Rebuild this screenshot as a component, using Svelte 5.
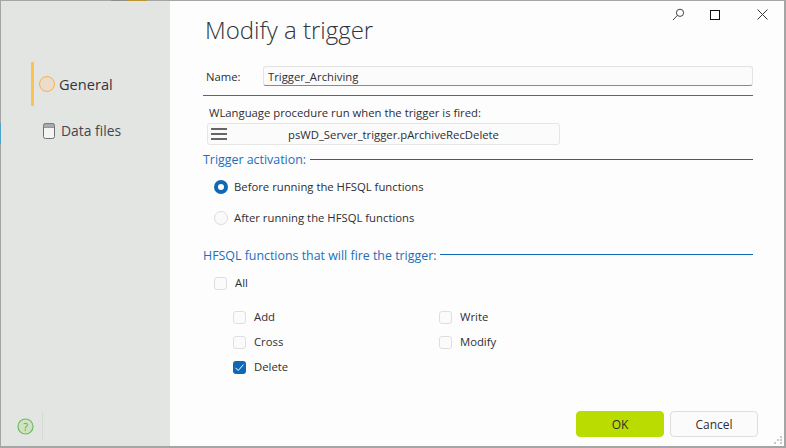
<script lang="ts">
  let name = $state('Trigger_Archiving');

  const leftFns = [
    { label: 'Add', checked: false },
    { label: 'Cross', checked: false },
    { label: 'Delete', checked: true }
  ];
  const rightFns = [
    { label: 'Write', checked: false },
    { label: 'Modify', checked: false }
  ];
</script>

{#snippet check(label: string, checked: boolean)}
  <label class="check">
    <span class="box" class:on={checked}>
      {#if checked}
        <svg width="13" height="13" viewBox="0 0 13 13"><path d="M2.5 6.8 5.2 9.5 10.5 3.6" fill="none" stroke="#fff" stroke-width="1" /></svg>
      {/if}
    </span>
    <span>{label}</span>
  </label>
{/snippet}

<div class="window">
  <aside class="sidebar">
    <nav class="nav">
      <div class="nav-item active">
        <span class="bar"></span>
        <span class="dot"></span>
        <span>General</span>
      </div>
      <div class="nav-item files">
        <svg width="12" height="16" viewBox="0 0 12 16">
          <rect x="0.5" y="0.5" width="11" height="15" rx="2" fill="#f4f4f4" stroke="#6f7072" />
          <path d="M.5 4.5V2.5a2 2 0 0 1 2-2h7a2 2 0 0 1 2 2v2z" fill="#a9aaaa" stroke="#6f7072" stroke-width="0.6" />
        </svg>
        <span>Data files</span>
      </div>
    </nav>
    <div class="help">
      <svg width="17" height="17" viewBox="0 0 17 17">
        <circle cx="8.5" cy="8.5" r="7.5" fill="#cfe3c4" stroke="#6cbb62" stroke-width="1.2" />
        <text x="8.5" y="12.5" text-anchor="middle" font-size="11" fill="#5aa850" font-family="Open Sans, sans-serif">?</text>
      </svg>
      <span class="help-sep"></span>
    </div>
  </aside>

  <main class="main">
    <div class="controls">
      <svg width="13" height="13" viewBox="0 0 13 13"><circle cx="8" cy="4.8" r="3.6" fill="none" stroke="#444" /><path d="M5.4 7.4 1 12" stroke="#444" fill="none" /></svg>
      <span class="max"></span>
      <svg width="11" height="11" viewBox="0 0 11 11"><path d="M.5.5l10 10M10.5.5l-10 10" stroke="#333" fill="none" /></svg>
    </div>

    <h1>Modify a trigger</h1>

    <div class="name-row">
      <span class="name-label">Name:</span>
      <input class="name-input" bind:value={name} />
    </div>
    <div class="rule"></div>

    <p class="proc-label">WLanguage procedure run when the trigger is fired:</p>
    <div class="proc">
      <span class="burger"><i></i><i></i><i></i></span>
      <span class="proc-text">psWD_Server_trigger.pArchiveRecDelete</span>
    </div>

    <div class="section first"><span>Trigger activation:</span><i></i></div>
    <div class="radios">
      <label class="radio"><span class="circle on"></span>Before running the HFSQL functions</label>
      <label class="radio"><span class="circle"></span>After running the HFSQL functions</label>
    </div>

    <div class="section second"><span>HFSQL functions that will fire the trigger:</span><i></i></div>
    <div class="all">{@render check('All', false)}</div>
    <div class="fns">
      <div class="fn-col">
        {#each leftFns as f}{@render check(f.label, f.checked)}{/each}
      </div>
      <div class="fn-col">
        {#each rightFns as f}{@render check(f.label, f.checked)}{/each}
      </div>
    </div>

    <div class="footer">
      <button class="btn ok">OK</button>
      <button class="btn">Cancel</button>
    </div>
    <svg class="grip" width="9" height="9" viewBox="0 0 9 9" fill="#c8c8c8"><rect x="6" y="0" width="2" height="2" /><rect x="3" y="3" width="2" height="2" /><rect x="6" y="3" width="2" height="2" /><rect x="0" y="6" width="2" height="2" /><rect x="6" y="6" width="2" height="2" /></svg>
  </main>
</div>

<style>
  /* the desktop behind the window shows through its 1px edge */
  :global(body) {
    margin: 0;
    background-color: #a5a5a5;
    background-image:
      linear-gradient(90deg, #a5a5a5 111px, #8f8f8f 111px, #8f8f8f 127px, #b8962f 127px, #b8962f 147px, #a5a5a5 147px),
      linear-gradient(180deg, #a5a5a5 123px, #4aa3c8 123px, #4aa3c8 144px, #a5a5a5 144px);
    background-size: 100% 1px, 1px 100%;
    background-repeat: no-repeat;
  }

  .window {
    box-sizing: border-box;
    width: 786px;
    height: 448px;
    display: flex;
    overflow: hidden;
    border: 1px solid transparent;
    border-bottom: 2px solid #a5a5a5;
    border-right: 2px solid #a5a5a5;
    font-family: "Open Sans", sans-serif;
    font-size: 11.3px;
    color: #2e2e33;
  }

  .sidebar {
    width: 169px;
    flex: none;
    background: #e3e5e2;
    display: flex;
    flex-direction: column;
    justify-content: space-between;
  }

  .nav {
    padding: 61px 0 0 30px;
  }

  .nav-item {
    display: flex;
    align-items: center;
    font-size: 14.6px;
    color: #33363f;
  }

  .active {
    height: 44px;
    gap: 4px;
  }

  .bar {
    width: 3px;
    height: 44px;
    background: #fcc24d;
    border-radius: 1px;
    margin-right: 1px;
  }

  .dot {
    box-sizing: border-box;
    width: 16px;
    height: 16px;
    border-radius: 50%;
    background: #ecdccb;
    border: 1px solid #fbb04f;
  }

  .files {
    margin-top: 15px;
    padding-left: 12px;
    gap: 6px;
    font-size: 13.9px;
    color: #44464f;
  }

  .help {
    display: flex;
    align-items: center;
    gap: 8px;
    padding: 0 0 6px 16px;
  }

  .help-sep {
    width: 1px;
    height: 28px;
    background: #d7d9d6;
  }

  .main {
    position: relative;
    flex: 1;
    background: #fdfdfd;
    padding: 0 31px 0 33px;
  }

  .controls {
    position: absolute;
    top: 7px;
    right: 16px;
    display: flex;
    align-items: center;
    gap: 25px;
  }

  .controls svg:last-child {
    margin-left: 12px;
  }

  .max {
    box-sizing: border-box;
    width: 10px;
    height: 10px;
    border: 1.5px solid #111;
  }

  h1 {
    margin: 0;
    padding: 11px 0 0 2px;
    font-size: 24px;
    line-height: 35px;
    font-weight: 300;
    color: #30343b;
  }

  .name-row {
    display: flex;
    align-items: center;
    margin-top: 19px;
  }

  .name-label {
    width: 57px;
    padding-left: 3px;
  }

  .name-input {
    flex: 1;
    min-width: 0;
    box-sizing: border-box;
    height: 20px;
    padding: 0 4px;
    font: inherit;
    color: inherit;
    background: #fbfbfb;
    border: 1px solid #e3e3e3;
    border-bottom-color: #8a8a8a;
    border-radius: 3px;
    outline: none;
  }

  .rule {
    height: 1px;
    background: #666;
    margin-top: 9px;
  }

  .proc-label {
    margin: 0;
    padding: 8px 0 0 6px;
    line-height: 17px;
  }

  .proc {
    display: flex;
    align-items: center;
    box-sizing: border-box;
    width: 353px;
    height: 22px;
    margin: 2px 0 0 4px;
    background: #fbfbfb;
    border: 1px solid #e6e6e6;
    border-radius: 3px;
  }

  .burger {
    display: flex;
    flex-direction: column;
    gap: 3px;
    width: 16px;
    margin-left: 3px;
  }

  .burger i {
    height: 2px;
    background: #666;
  }

  .proc-text {
    margin-left: 61px;
  }

  .section {
    display: flex;
    align-items: center;
    gap: 4px;
    font-size: 12.4px;
    color: #1a6fbd;
    line-height: 17px;
  }

  .section i {
    flex: 1;
    height: 1px;
    background: #0f67b5;
  }

  .first {
    margin-top: 6px;
  }

  .second {
    margin-top: 20px;
  }

  .second i {
    margin-bottom: 2px;
  }

  .radios {
    display: flex;
    flex-direction: column;
    gap: 13px;
    padding: 10px 0 0 11px;
  }

  .radio {
    display: flex;
    align-items: center;
    gap: 6px;
    line-height: 18px;
  }

  .circle {
    box-sizing: border-box;
    width: 14px;
    height: 14px;
    border-radius: 50%;
    background: #fafafa;
    border: 1px solid #dcdcdc;
  }

  .circle.on {
    background: #fff;
    border: 4px solid #0f67b5;
  }

  .check {
    display: flex;
    align-items: center;
    gap: 8px;
    line-height: 18px;
  }

  .box {
    box-sizing: border-box;
    width: 13px;
    height: 13px;
    border: 1px solid #dfdfdf;
    border-radius: 3px;
    background: #fbfbfb;
    display: flex;
  }

  .box.on {
    background: #0f67b5;
    border: 0;
  }

  .all {
    padding: 10px 0 0 11px;
  }

  .fns {
    display: flex;
    padding: 16px 0 0 30px;
  }

  .fn-col {
    width: 206px;
    display: flex;
    flex-direction: column;
    gap: 7px;
  }

  .footer {
    position: absolute;
    right: 26px;
    bottom: 9px;
    display: flex;
    gap: 6px;
  }

  .btn {
    box-sizing: border-box;
    width: 88px;
    height: 26px;
    font: inherit;
    font-size: 12px;
    color: #2e2e33;
    background: #fbfbfb;
    border: 1px solid #dedede;
    border-radius: 4px;
  }

  .btn.ok {
    background: #bbdc00;
    border-color: #bbdc00;
  }

  .grip {
    position: absolute;
    right: 1px;
    bottom: 1px;
  }
</style>
